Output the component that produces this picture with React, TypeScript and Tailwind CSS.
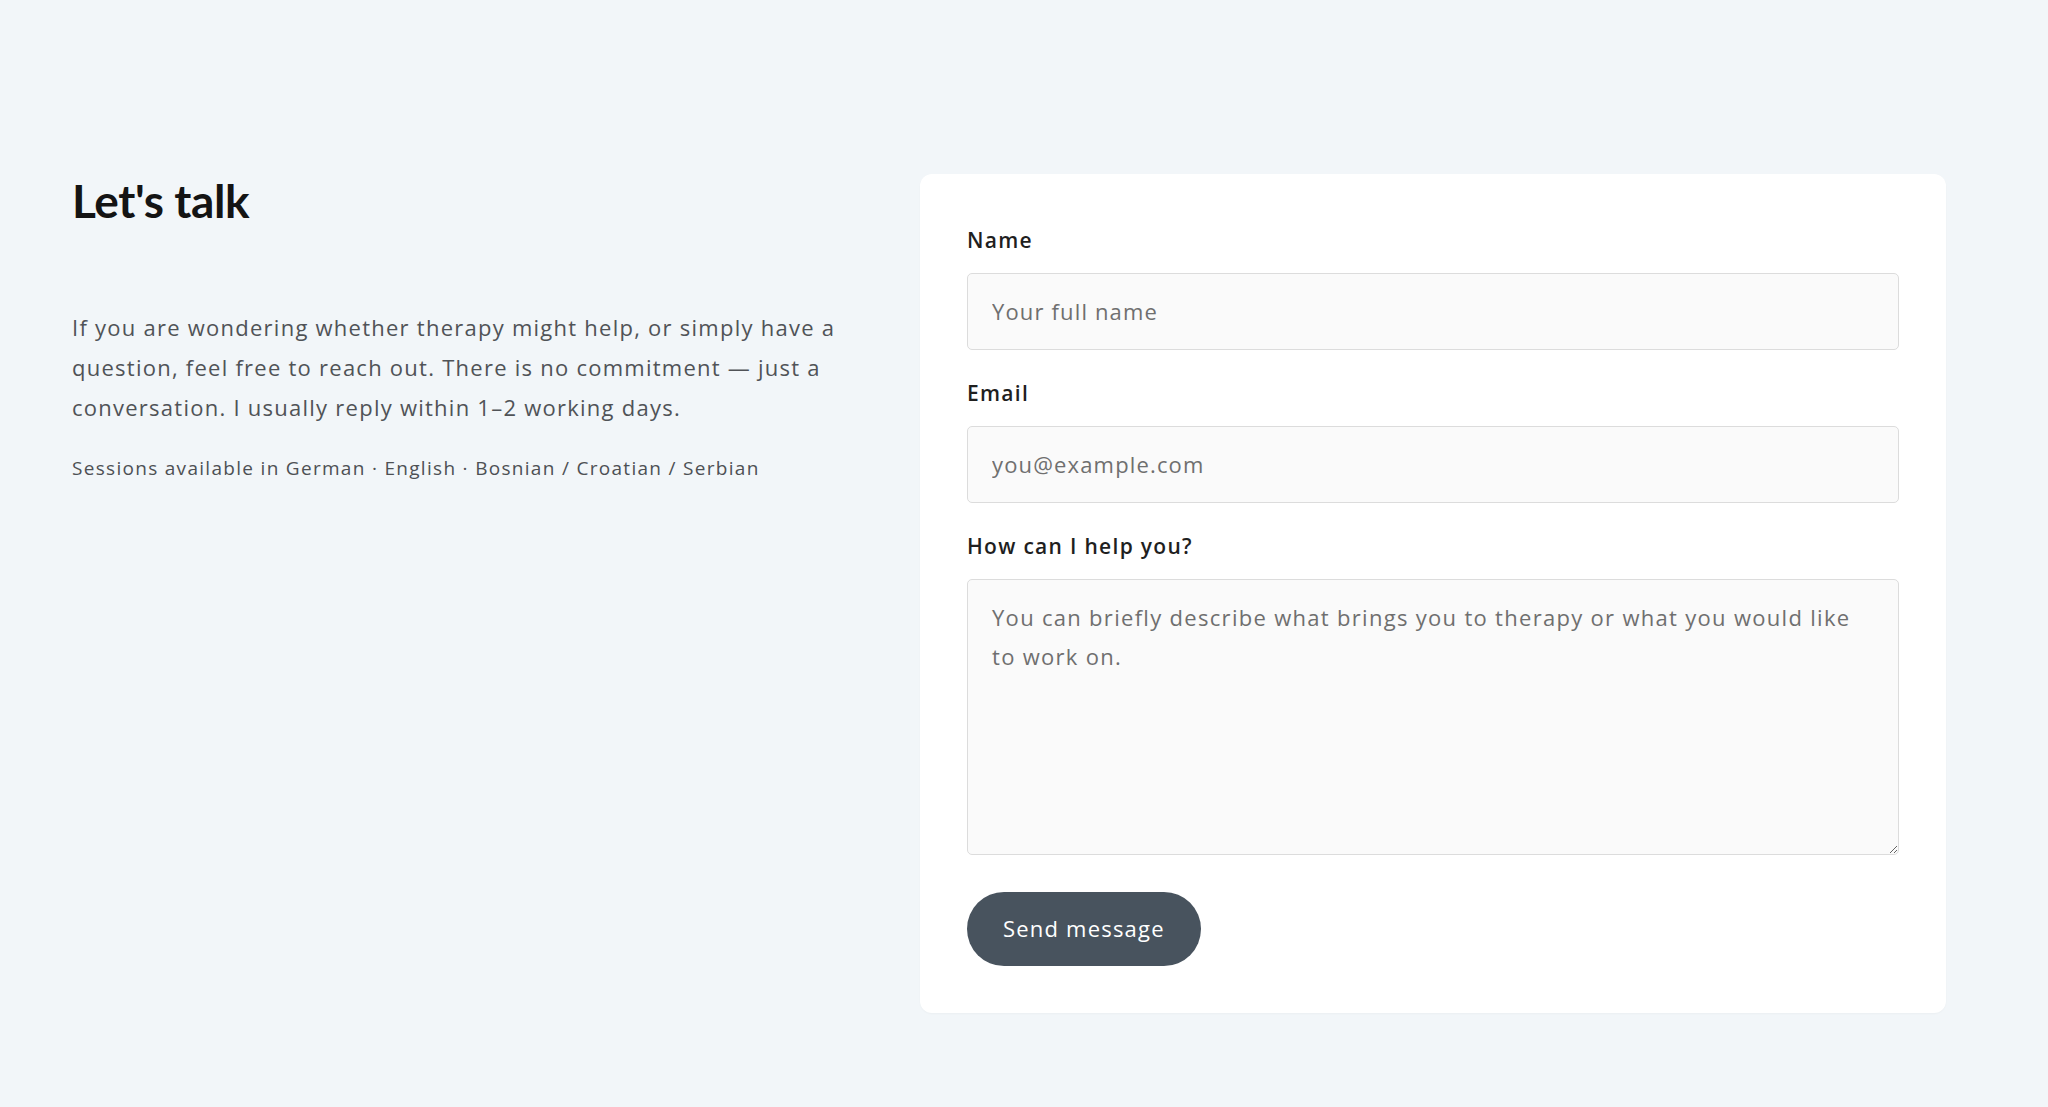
export default function App() {
  const inputCls =
    "block w-full rounded-[5px] border border-[#dcdcdc] bg-[#fafafa] py-[18px] text-[22px] leading-[39px] text-[#222] placeholder:text-[#6f6f6f] outline-none";

  return (
    <div className="min-h-screen bg-[#f2f6f9] font-['Open_Sans',sans-serif]">
      <div className="flex items-start gap-[80px] pl-[72px] pr-[102px] pt-[174px] pb-[95px]">
        {/* Intro */}
        <div className="w-[768px] shrink-0">
          <h1 className="font-['Lato',sans-serif] text-[46px] font-bold leading-[52px] tracking-[-0.4px] text-[#141414] mt-[1px]">
            Let's talk
          </h1>
          <p className="mt-[80px] text-[22px] leading-[40px] tracking-[1.25px] text-[#505357]">
            If you are wondering whether therapy might help, or simply have a
            question, feel free to reach out. There is no commitment — just a
            conversation. I usually reply within 1–2 working days.
          </p>
          <p className="mt-[26px] text-[19px] leading-[30px] tracking-[1.3px] text-[#4d5054]">
            Sessions available in German · English · Bosnian / Croatian / Serbian
          </p>
        </div>

        {/* Form card */}
        <form className="flex-1 rounded-xl bg-white px-[47px] pt-[52px] pb-[47px] shadow-[0_1px_2px_rgba(0,0,0,0.03)]">
          <label className="block">
            <span className="block text-[21px] font-semibold leading-[28px] tracking-[1.3px] text-[#1f1f1f]">Name</span>
            <input type="text" placeholder="Your full name" className={`mt-[19px] px-6 tracking-[1.15px] ${inputCls}`} />
          </label>
          <label className="mt-[29px] block">
            <span className="block text-[21px] font-semibold leading-[28px] tracking-[1.3px] text-[#1f1f1f]">Email</span>
            <input type="email" placeholder="you@example.com" className={`mt-[19px] px-6 tracking-[1.15px] ${inputCls}`} />
          </label>
          <label className="mt-[29px] block">
            <span className="block text-[21px] font-semibold leading-[28px] tracking-[1.3px] text-[#1f1f1f]">How can I help you?</span>
            <textarea
              placeholder="You can briefly describe what brings you to therapy or what you would like to work on."
              className={`mt-[19px] h-[276px] pl-6 pr-[36px] tracking-[1.3px] ${inputCls}`}
            />
          </label>
          <button
            type="button"
            className="mt-[37px] rounded-full bg-[#48535e] px-[36px] pt-[17px] pb-[19px] text-[22px] leading-[38px] tracking-[1.2px] text-white"
          >
            Send message
          </button>
        </form>
      </div>
    </div>
  );
}
